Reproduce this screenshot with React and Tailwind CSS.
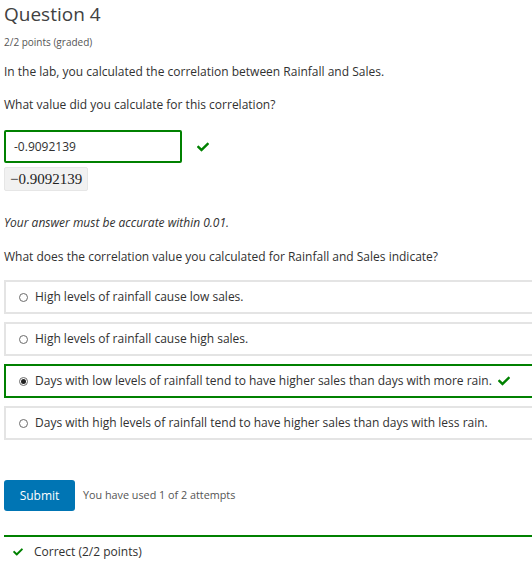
import React from "react";
import { FaCheck } from "react-icons/fa";

const options = [
  { text: "High levels of rainfall cause low sales." },
  { text: "High levels of rainfall cause high sales." },
  { text: "Days with low levels of rainfall tend to have higher sales than days with more rain.", selected: true },
  { text: "Days with high levels of rainfall tend to have higher sales than days with less rain." },
];

const Check = ({ className = "" }) => (
  <FaCheck className={`text-[#008100] ${className}`} />
);

const Option = ({ text, selected }) => (
  <div
    className={`flex items-center h-[34px] pl-[13px] border-2 ${
      selected ? "border-[#008100]" : "border-[#e4e4e4]"
    }`}
  >
    {/* radio */}
    <span className="w-[9px] h-[9px] rounded-full border border-[#6b6b6b] bg-white flex items-center justify-center">
      {selected && <span className="w-[5px] h-[5px] rounded-full bg-[#222]" />}
    </span>
    <span className="ml-[7px] text-[12px] leading-[16px] text-[#313131]">{text}</span>
    {selected && <Check className="ml-[5px] w-[14px] h-[12px]" />}
  </div>
);

export default function App() {
  return (
    <div className="w-full overflow-hidden bg-white" style={{ fontFamily: '"Open Sans", sans-serif' }}>
      <div className="w-[560px] pl-[4px] pb-[12px]">
        <h2 className="mt-[3px] text-[19px] leading-[22px] text-[#414141]">Question 4</h2>
        <div className="mt-[11px] text-[10px] leading-[12px] text-[#555]">2/2 points (graded)</div>

        <p className="mt-[16px] text-[12px] leading-[16px] text-[#313131]">
          In the lab, you calculated the correlation between Rainfall and Sales.
        </p>
        <p className="mt-[17px] text-[12px] leading-[16px] text-[#313131]">
          What value did you calculate for this correlation?
        </p>

        {/* numeric answer */}
        <div className="mt-[17px] flex items-center">
          <div className="w-[178px] h-[33px] border-2 border-[#008100] rounded-[2px] flex items-center pl-[8px] text-[12px] text-[#313131]">
            -0.9092139
          </div>
          <Check className="ml-[14px] w-[14px] h-[12px]" />
        </div>
        <div className="mt-[4px] inline-flex items-center h-[24px] px-[5px] bg-[#f1f1f1] border border-[#e6e6e6] rounded-[2px] text-[15px] text-[#222]" style={{ fontFamily: '"Liberation Serif", serif' }}>
          −0.9092139
        </div>

        <p className="mt-[24px] text-[12px] leading-[16px] italic text-[#313131]">
          Your answer must be accurate within 0.01.
        </p>
        <p className="mt-[18px] text-[12px] leading-[16px] text-[#313131]">
          What does the correlation value you calculated for Rainfall and Sales indicate?
        </p>

        <div className="mt-[15px] flex flex-col gap-[8px]">
          {options.map((o, i) => (
            <Option key={i} {...o} />
          ))}
        </div>

        <div className="mt-[40px] flex items-center">
          <button className="h-[31px] w-[71px] rounded-[3px] bg-[#0075b4] text-white text-[12px]">
            Submit
          </button>
          <span className="ml-[8px] text-[10.8px] text-[#555]">You have used 1 of 2 attempts</span>
        </div>

        <div className="mt-[24px] h-[2px] bg-[#008100]" />
        <div className="mt-[7px] flex items-center h-[16px] pl-[8px]">
          <Check className="w-[12px] h-[10px]" />
          <span className="ml-[10px] text-[12px] text-[#313131]">Correct (2/2 points)</span>
        </div>
      </div>
    </div>
  );
}
